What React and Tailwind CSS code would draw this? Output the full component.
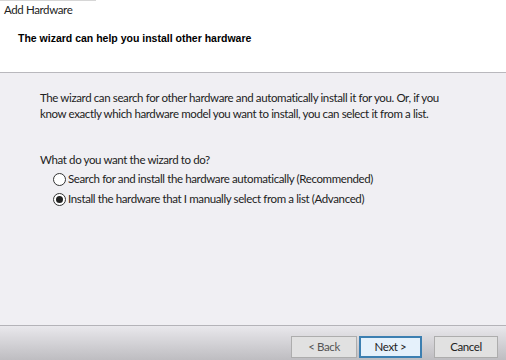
export default function App() {
  return (
    <div
      className="w-[506px] h-[360px] flex flex-col overflow-hidden bg-[#f0eff3] text-[#1a1a1a] text-[11.5px] tracking-[-0.38px]"
      style={{ fontFamily: 'Lato, "Noto Sans", sans-serif' }}
    >
      {/* Header */}
      <div className="h-[73px] bg-white shrink-0 border-b border-[#b9b8bd] relative">
        <div className="absolute left-0 top-0 w-[96px] h-px bg-[#d6d6d6]" />
        <div className="pl-[4px] pt-[2px] leading-[16px] text-[#222]">Add Hardware</div>
        <div
          className="pl-[18px] pt-[13px] text-[10.5px] font-bold leading-[14px] tracking-normal text-black whitespace-nowrap"
          style={{ fontFamily: '"Liberation Sans", Arial, sans-serif' }}
        >
          The wizard can help you install other hardware
        </div>
      </div>

      {/* Body */}
      <div className="flex-1 pl-[40px] pt-[17px] leading-[16px] text-[#222] whitespace-nowrap">
        <p>
          The wizard can search for other hardware and automatically install it for you. Or, if you
          <br />
          know exactly which hardware model you want to install, you can select it from a list.
        </p>
        <p className="mt-[30px]">What do you want the wizard to do?</p>
        <div className="pl-[13px] mt-[3px] flex flex-col gap-[4px]">
          <label className="flex items-center gap-[2px]">
            <span className="w-[13px] h-[13px] rounded-full border border-[#333] bg-white" />
            <span>Search for and install the hardware automatically (Recommended)</span>
          </label>
          <label className="flex items-center gap-[2px]">
            <span className="w-[13px] h-[13px] rounded-full border border-[#333] bg-white flex items-center justify-center">
              <span className="w-[7px] h-[7px] rounded-full bg-[#222]" />
            </span>
            <span>Install the hardware that I manually select from a list (Advanced)</span>
          </label>
        </div>
      </div>

      {/* Footer */}
      <div className="h-[35px] shrink-0 border-t border-[#b4b3b8] bg-gradient-to-b from-[#e9e8ec] to-[#bebdc1] flex items-start pt-[10px] pl-[291px] leading-[16px]">
        <button className="w-[66px] h-[22px] border border-[#adadad] bg-[#e1e1e1] text-[#555]">
          &lt; Back
        </button>
        <button className="ml-[2px] w-[63px] h-[22px] border-2 border-[#3c7fb1] bg-[#e5f1fb] text-[#222]">
          Next &gt;
        </button>
        <button className="ml-[12px] w-[64px] h-[22px] border border-[#adadad] bg-[#e1e1e1] text-[#222]">
          Cancel
        </button>
      </div>
    </div>
  );
}
